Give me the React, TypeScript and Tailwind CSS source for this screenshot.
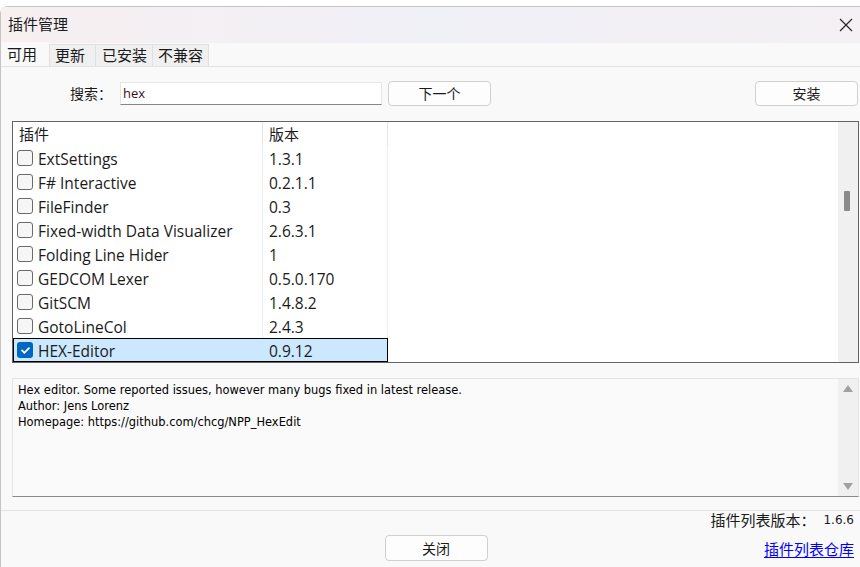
import { FaCheck } from "react-icons/fa";

const plugins = [
  { name: "ExtSettings", version: "1.3.1" },
  { name: "F# Interactive", version: "0.2.1.1" },
  { name: "FileFinder", version: "0.3" },
  { name: "Fixed-width Data Visualizer", version: "2.6.3.1" },
  { name: "Folding Line Hider", version: "1" },
  { name: "GEDCOM Lexer", version: "0.5.0.170" },
  { name: "GitSCM", version: "1.4.8.2" },
  { name: "GotoLineCol", version: "2.4.3" },
  { name: "HEX-Editor", version: "0.9.12", checked: true },
];

const ui = "font-['Open_Sans','Noto_Sans_CJK_SC',sans-serif]";

export default function App() {
  return (
    <div className={`w-[860px] h-[567px] bg-white overflow-hidden text-[#1a1a1a] ${ui}`}>
      <div className="h-[6px] bg-white" />
      <div className="h-[561px] flex flex-col bg-[#f9f9f9] border-t border-l border-[#c4c4c4] rounded-tl-[8px]">
        {/* title bar */}
        <div className="h-[36px] flex items-center justify-between pl-[7px] pr-[6px] bg-gradient-to-r from-[#f7eff0] via-[#f0f0f7] to-[#f4f0f3]">
          <span className="text-[15px] -mt-[2px]">插件管理</span>
          <svg width="14" height="14" viewBox="0 0 14 14" className="mr-[1px]">
            <path d="M1 1 L13 13 M13 1 L1 13" stroke="#222" strokeWidth="1.1" />
          </svg>
        </div>

        {/* tabs */}
        <div className="h-[24px] flex items-end border-b border-[#e3e3e3] text-[15px]">
          <div className="h-[24px] w-[48px] flex items-center pl-[6px] bg-[#f9f9f9]">可用</div>
          <div className="h-[22px] w-[47px] flex items-center pl-[5px] bg-[#f0f0f0] border border-b-0 border-[#e0e0e0]">更新</div>
          <div className="h-[22px] w-[57px] flex items-center pl-[6px] bg-[#f0f0f0] border border-b-0 border-l-0 border-[#e0e0e0]">已安装</div>
          <div className="h-[22px] w-[56px] flex items-center pl-[5px] bg-[#f0f0f0] border border-b-0 border-l-0 border-[#e0e0e0]">不兼容</div>
        </div>

        {/* search row */}
        <div className="mt-[14px] h-[25px] flex items-center text-[14px]">
          <span className="ml-[69px] w-[50px]">搜索：</span>
          <div className="w-[262px] h-[23px] bg-white border border-[#e5e5e5] border-b-[#868686] flex items-center pl-[2px] text-[13px] text-[#3a0d20]">
            hex
          </div>
          <button className="ml-[6px] w-[103px] h-[25px] bg-[#fdfdfd] border border-[#d0d0d0] rounded-[4px] text-[14px]">下一个</button>
          <div className="flex-1" />
          <button className="mr-[2px] w-[103px] h-[25px] bg-[#fdfdfd] border border-[#d0d0d0] rounded-[4px] text-[14px]">安装</button>
        </div>

        {/* plugin list */}
        <div className="mt-[15px] ml-[11px] mr-[1px] h-[242px] border border-[#646464] bg-white flex text-[15.5px]">
          <div className="w-[375px] flex flex-col">
            <div className="h-[25px] flex items-center text-[15px]">
              <div className="w-[250px] h-full pl-[6px] flex items-center border-r border-[#e5e5e5]">插件</div>
              <div className="w-[125px] h-full pl-[6px] flex items-center border-r border-[#e5e5e5]">版本</div>
            </div>
            {plugins.map((p) => (
              <div
                key={p.name}
                className={`h-[24px] shrink-0 flex items-center ${p.checked ? "bg-[#cce8ff] outline outline-1 outline-black -outline-offset-1" : ""}`}
              >
                <div className={`w-[250px] h-full flex items-center pl-[4px] ${p.checked ? "" : "border-r border-[#e8f1f9]"}`}>
                  {p.checked ? (
                    <span className="w-[16px] h-[16px] rounded-[3px] bg-[#0067c0] flex items-center justify-center">
                      <FaCheck className="text-white text-[9px]" />
                    </span>
                  ) : (
                    <span className="w-[16px] h-[16px] rounded-[3px] border border-[#6b6b6b] bg-[#f6f6f6]" />
                  )}
                  <span className="ml-[5px] pt-[4px] whitespace-nowrap">{p.name}</span>
                </div>
                <div className={`w-[125px] h-full flex items-center pl-[6px] pt-[4px] ${p.checked ? "" : "border-r border-[#e8f1f9]"}`}>{p.version}</div>
              </div>
            ))}
          </div>
          <div className="flex-1" />
          <div className="w-[20px] bg-[#f0f0f0] relative">
            <div className="absolute left-[6px] top-[69px] w-[6px] h-[20px] bg-[#8a8a8a] rounded-[1px]" />
          </div>
        </div>

        {/* description */}
        <div className="mt-[15px] ml-[11px] mr-[1px] h-[119px] bg-[#fafafa] border border-[#e4e4e4] border-b-[#8a8a8a] flex font-['DejaVu_Sans','Noto_Sans_CJK_SC',sans-serif] text-[11.45px] leading-[16px] text-black">
          <div className="flex-1 pl-[5px] pt-[3px]">
            <div>Hex editor. Some reported issues, however many bugs fixed in latest release.</div>
            <div>Author: Jens Lorenz</div>
            <div>Homepage: https://github.com/chcg/NPP_HexEdit</div>
          </div>
          <div className="w-[20px] bg-[#f0f0f0] flex flex-col items-center justify-between py-[6px]">
            <svg width="10" height="7" viewBox="0 0 10 7"><path d="M5 0 L10 7 L0 7 Z" fill="#a0a0a0" /></svg>
            <svg width="10" height="7" viewBox="0 0 10 7"><path d="M0 0 L10 0 L5 7 Z" fill="#a0a0a0" /></svg>
          </div>
        </div>

        {/* footer */}
        <div className="mt-[13px] border-t border-[#e3e3e3] flex-1 relative">
          <div className="absolute right-[6px] -top-[2px] flex items-center text-[15px]">
            <span>插件列表版本：</span>
            <span className="ml-[8px] font-['DejaVu_Sans',sans-serif] text-[12px]">1.6.6</span>
          </div>
          <div className="flex justify-center pt-[24px] pl-[11px]">
            <button className="w-[103px] h-[26px] bg-[#fdfdfd] border border-[#d0d0d0] rounded-[4px] text-[14px]">关闭</button>
          </div>
          <a className="absolute right-[6px] top-[27px] text-[15px] text-[#0000ff] underline underline-offset-2">插件列表仓库</a>
        </div>
      </div>
    </div>
  );
}
